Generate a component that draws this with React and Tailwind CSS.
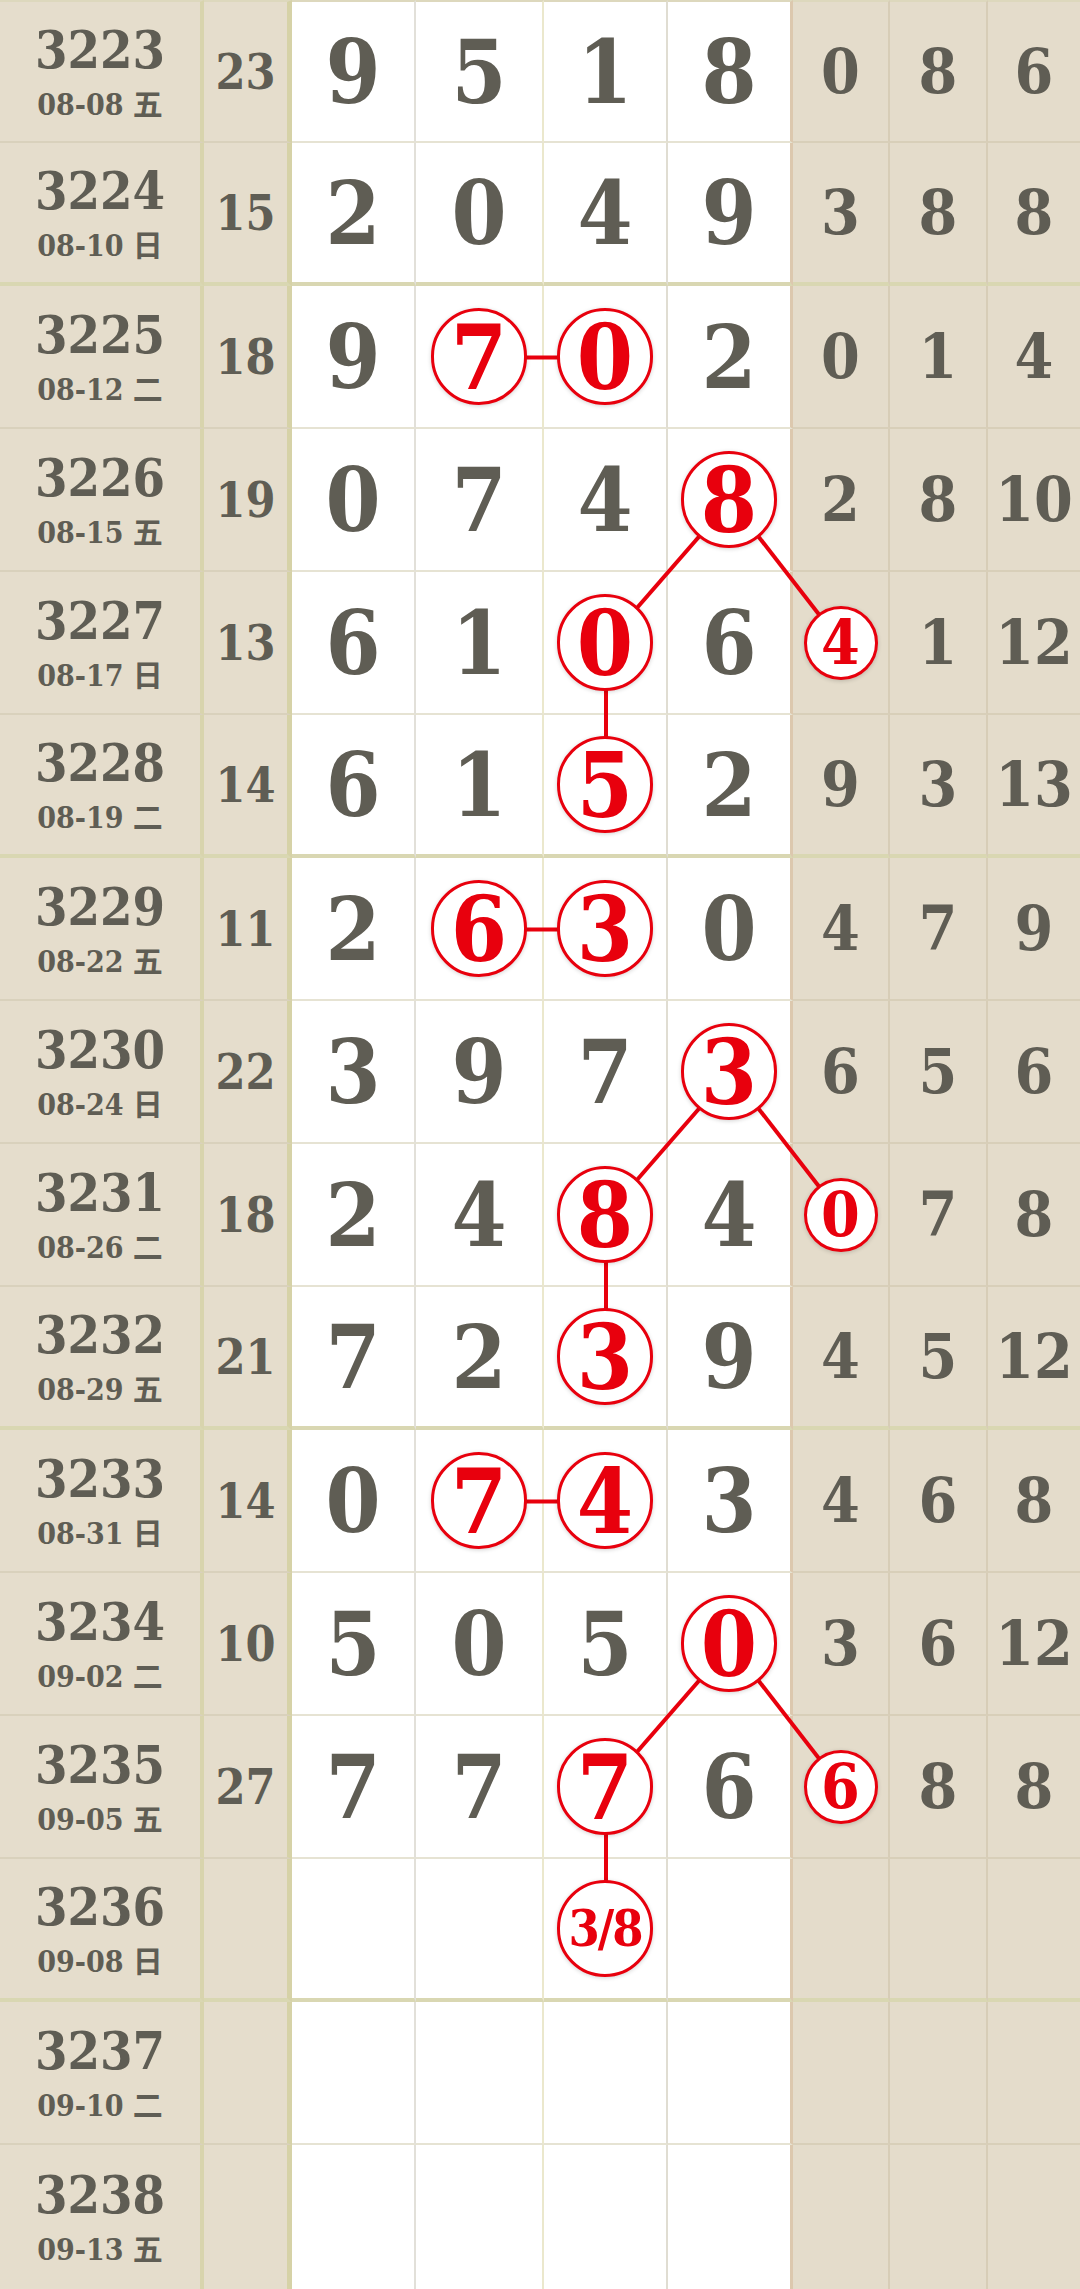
import clsx from 'clsx';

const ROW_H = 143;
const COL_W = [204, 88, 124, 128, 124, 125, 97, 98, 92];

const rows = [
  { no: '3223', date: '08-08', wd: '五', sum: '23', d: ['9', '5', '1', '8'], t: ['0', '8', '6'] },
  { no: '3224', date: '08-10', wd: '日', sum: '15', d: ['2', '0', '4', '9'], t: ['3', '8', '8'] },
  { no: '3225', date: '08-12', wd: '二', sum: '18', d: ['9', '7', '0', '2'], t: ['0', '1', '4'] },
  { no: '3226', date: '08-15', wd: '五', sum: '19', d: ['0', '7', '4', '8'], t: ['2', '8', '10'] },
  { no: '3227', date: '08-17', wd: '日', sum: '13', d: ['6', '1', '0', '6'], t: ['4', '1', '12'] },
  { no: '3228', date: '08-19', wd: '二', sum: '14', d: ['6', '1', '5', '2'], t: ['9', '3', '13'] },
  { no: '3229', date: '08-22', wd: '五', sum: '11', d: ['2', '6', '3', '0'], t: ['4', '7', '9'] },
  { no: '3230', date: '08-24', wd: '日', sum: '22', d: ['3', '9', '7', '3'], t: ['6', '5', '6'] },
  { no: '3231', date: '08-26', wd: '二', sum: '18', d: ['2', '4', '8', '4'], t: ['0', '7', '8'] },
  { no: '3232', date: '08-29', wd: '五', sum: '21', d: ['7', '2', '3', '9'], t: ['4', '5', '12'] },
  { no: '3233', date: '08-31', wd: '日', sum: '14', d: ['0', '7', '4', '3'], t: ['4', '6', '8'] },
  { no: '3234', date: '09-02', wd: '二', sum: '10', d: ['5', '0', '5', '0'], t: ['3', '6', '12'] },
  { no: '3235', date: '09-05', wd: '五', sum: '27', d: ['7', '7', '7', '6'], t: ['6', '8', '8'] },
  { no: '3236', date: '09-08', wd: '日', sum: '', d: ['', '', '3/8', ''], t: ['', '', ''] },
  { no: '3237', date: '09-10', wd: '二', sum: '', d: ['', '', '', ''], t: ['', '', ''] },
  { no: '3238', date: '09-13', wd: '五', sum: '', d: ['', '', '', ''], t: ['', '', ''] },
];

// circled cells: "row-col", col 2..5 = the four digits, 6..8 = tail columns
const marked = new Set([
  '2-3', '2-4', '3-5', '4-4', '4-6', '5-4',
  '6-3', '6-4', '7-5', '8-4', '8-6', '9-4',
  '10-3', '10-4', '11-5', '12-4', '12-6', '13-4',
]);

const links = [
  [[2, 3], [2, 4]],
  [[3, 5], [4, 4]], [[3, 5], [4, 6]], [[4, 4], [5, 4]],
  [[6, 3], [6, 4]],
  [[7, 5], [8, 4]], [[7, 5], [8, 6]], [[8, 4], [9, 4]],
  [[10, 3], [10, 4]],
  [[11, 5], [12, 4]], [[11, 5], [12, 6]], [[12, 4], [13, 4]],
];

const colCenter = (c) => COL_W.slice(0, c).reduce((a, b) => a + b, 0) + COL_W[c] / 2;
const rowCenter = (r) => r * ROW_H + ROW_H / 2;

const colCls = [
  'bg-[#e5ddcc] border-r-4 border-r-[#d8d4ad]',
  'bg-[#e5ddcc] border-r-[5px] border-r-[#d6d2a7]',
  'bg-white border-r-2 border-r-[#e2e0d9]',
  'bg-white border-r-2 border-r-[#ebe8cd]',
  'bg-white border-r-2 border-r-[#e0ddd2]',
  'bg-white border-r-[3px] border-r-[#dcc8ae]',
  'bg-[#e4dccb] border-r-2 border-r-[#d7cdb7]',
  'bg-[#e4dccb] border-r-2 border-r-[#d7cdb7]',
  'bg-[#e4dccb]',
];

const thinBottom = [
  'border-b-2 border-b-[#d9d1bc]',
  'border-b-2 border-b-[#d9d1bc]',
  'border-b-2 border-b-[#e6e3d3]',
  'border-b-2 border-b-[#e6e3d3]',
  'border-b-2 border-b-[#e6e3d3]',
  'border-b-2 border-b-[#e6e3d3]',
  'border-b-2 border-b-[#d8cfb9]',
  'border-b-2 border-b-[#d8cfb9]',
  'border-b-2 border-b-[#d8cfb9]',
];

const serif = "font-['DejaVu_Serif','Noto_Sans_CJK_SC',serif] font-stretch-condensed";

function Ball({ children, small, text }) {
  return (
    <span
      className={clsx(
        'relative z-20 flex items-center justify-center rounded-full border-[3px] border-[#e8000d] bg-white font-bold leading-none text-[#e8000d] shadow-[0_1px_4px_rgba(0,0,0,0.18)]',
        small ? 'h-[74px] w-[74px] text-[62px]' : 'h-[97px] w-[96px]',
        !small && (text ? 'text-[50px] tracking-[-2px]' : 'text-[90px]')
      )}
    >
      {children}
    </span>
  );
}

function Row({ row, i }) {
  const thick = i === 1 || i === 5 || i === 9 || i === 13;
  const last = i === rows.length - 1;
  const cells = [
    <div key="d" className="flex flex-col items-center leading-none">
      <span className="text-[52px] font-bold">{row.no}</span>
      <span className="mt-[14px] text-[30px] font-bold">
        {row.date} {row.wd}
      </span>
    </div>,
    <span key="s" className="text-[48px] font-bold leading-none">{row.sum}</span>,
    ...row.d.map((v, k) => {
      const c = k + 2;
      if (marked.has(`${i}-${c}`)) return <Ball key={c} text={v.length > 1}>{v}</Ball>;
      return <span key={c} className="text-[88px] font-bold leading-none">{v}</span>;
    }),
    ...row.t.map((v, k) => {
      const c = k + 6;
      if (marked.has(`${i}-${c}`)) return <Ball key={c} small>{v}</Ball>;
      return <span key={c} className="text-[62px] font-bold leading-none">{v}</span>;
    }),
  ];

  return (
    <div
      className={clsx(
        'grid grid-cols-[204px_88px_124px_128px_124px_125px_97px_98px_92px]',
        last ? 'h-[144px]' : 'h-[143px]'
      )}
    >
      {cells.map((cell, c) => (
        <div
          key={c}
          className={clsx(
            'flex items-center justify-center',
            colCls[c],
            !last && (thick ? 'border-b-4 border-b-[#d9d7b2]' : thinBottom[c]),
            i === 0 && 'border-t-2 border-t-[#ddd8bd]'
          )}
        >
          {cell}
        </div>
      ))}
    </div>
  );
}

export default function App() {
  return (
    <div className={clsx('relative h-[2289px] w-[1080px] overflow-hidden bg-white text-[#5f5d54]', serif)}>
      {rows.map((row, i) => (
        <Row key={row.no} row={row} i={i} />
      ))}

      {/* connector lines, drawn under the circles */}
      <svg className="pointer-events-none absolute inset-0 z-10" width="1080" height="2289">
        {links.map(([[r1, c1], [r2, c2]], k) => (
          <line
            key={k}
            x1={colCenter(c1)}
            y1={rowCenter(r1)}
            x2={colCenter(c2)}
            y2={rowCenter(r2)}
            stroke="#e8000d"
            strokeWidth="4"
          />
        ))}
      </svg>
    </div>
  );
}
